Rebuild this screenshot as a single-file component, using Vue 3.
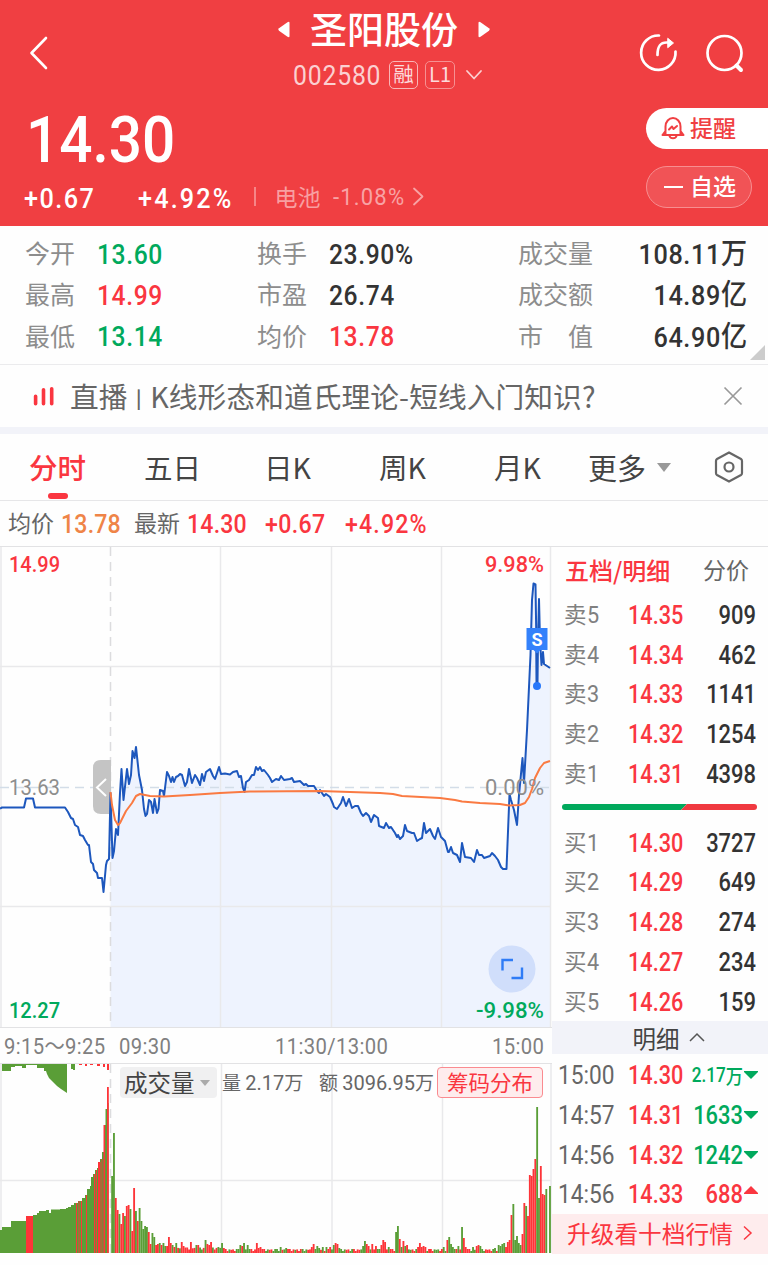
<template>
  <div class="page">
    <!-- Header -->
    <header class="header">
      <div class="nav">
        <svg class="back" viewBox="0 0 20 34"><path d="M17 2 2.500 17 17 32" /></svg>
        <div class="title-box">
          <div class="title">
            <svg class="tri" viewBox="0 0 12 17"><path d="M11.500 2v13q0 2-2 .8L1 9.800q-1.500-1.300 0-2.600L9.500 1.200q2-1.200 2 .8z" /></svg>
            <h1>圣阳股份</h1>
            <svg class="tri" viewBox="0 0 12 17"><path d="M.5 2v13q0 2 2 .8L11 9.800q1.500-1.300 0-2.600L2.500 1.200q-2-1.200-2 .8z" /></svg>
          </div>
          <div class="code-row">
            <span class="num code">002580</span>
            <span class="tag">融</span>
            <span class="tag tag-l1">L1</span>
            <svg class="chev-down" viewBox="0 0 16 10"><path d="M1 1l7 7.500L15 1" /></svg>
          </div>
        </div>
        <div class="nav-icons">
          <svg viewBox="0 0 40 40">
            <path d="M20 2.500a17.200 17.200 0 1 0 16.500 16" />
            <path d="M18.500 22c0-8 2-12.500 9-12.500h4" />
            <path class="solid" d="M29 5.500l5.500 4.500-5.500 4.500z" />
          </svg>
          <svg viewBox="0 0 40 40"><circle cx="18.500" cy="20" r="17" /><path d="M30.500 32.500l4.500 4.500" class="thick" /></svg>
        </div>
      </div>

      <div class="quote">
        <div>
          <div class="num price">14.30</div>
          <div class="change">
            <span class="num chg">+0.67</span>
            <span class="num pct">+4.92%</span>
            <i class="sep" />
            <span class="sector">电池</span>
            <span class="num sector-pct">-1.08%</span>
            <svg class="chev-right" viewBox="0 0 11 19"><path d="M1 1.500l8.500 8L1 17.500" /></svg>
          </div>
        </div>
        <div class="actions">
          <div class="btn-remind">
            <svg viewBox="0 0 24 24">
              <path d="M4.500 19V10.500a7.500 8.500 0 0 1 15 0V19M1.500 19h21M4.500 15l-3 4M19.500 15l3 4M8.500 20c1 3 6 3 7 0" />
              <path d="M8 13.500l3-3 1.500 2.500L16 10" />
            </svg>
            <span>提醒</span>
          </div>
          <div class="btn-fav"><i class="minus" /><span>自选</span></div>
        </div>
      </div>
    </header>

    <!-- Key stats -->
    <section class="stats">
      <div v-for="row in STATS" :key="row[0].label" class="stats-row">
        <template v-for="s in row" :key="s.label">
          <span class="stat-label">{{ s.label }}</span>
          <span class="num stat-value" :class="s.tone">{{ s.value }}<b v-if="s.unit">{{ s.unit }}</b></span>
        </template>
      </div>
      <i class="corner" />
    </section>

    <!-- Live banner -->
    <section class="banner">
      <svg class="live" viewBox="0 0 22 20"><path d="M2.600 10.200v7.600M10.500 3.700v14.100M18.700 2.700v15.100" /></svg>
      <span class="banner-text">直播<i class="bar">丨</i>K线形态和道氏理论-短线入门知识?</span>
      <svg class="close" viewBox="0 0 20 20"><path d="M1.500 1.500l17 17M18.500 1.500l-17 17" /></svg>
    </section>

    <!-- Period tabs -->
    <nav class="tabs">
      <div v-for="(tab, i) in TABS" :key="tab" class="tab" :class="{ active: i === 0 }">{{ tab }}</div>
      <div class="tab more">更多<i class="caret" /></div>
      <svg class="gear" viewBox="0 0 30 32">
        <path d="M15 1.500 27 8q1 .6 1 2v12q0 1.400-1 2L15 30.500 3 24q-1-.6-1-2V10q0-1.400 1-2z" />
        <circle cx="15" cy="16" r="4.500" />
      </svg>
    </nav>

    <section class="summary">
      <span class="sum-label">均价</span><span class="num avg">13.78</span>
      <span class="sum-label">最新</span><span class="num last">14.30</span>
      <span class="num delta">+0.67</span><span class="num delta-pct">+4.92%</span>
    </section>

    <main class="body">
      <div class="charts">
        <!-- Intraday price -->
        <svg class="price-chart" viewBox="0 547 552 480">
          <path class="area" :d="areaPath" />
          <path class="grid" d="M1 547V1027M220.500 547V1027M331.500 547V1027M441.500 547V1027M550.500 547V1027M0 666.500H551M0 906.500H551" />
          <path class="grid dash-v" d="M110.500 547V1027" />
          <path class="dash-h" d="M0 787.500H551" />
          <text x="9" y="572" class="t red" textLength="51" lengthAdjust="spacingAndGlyphs">14.99</text>
          <text x="485" y="572" class="t red" textLength="59" lengthAdjust="spacingAndGlyphs">9.98%</text>
          <text x="9" y="1018" class="t green" textLength="51" lengthAdjust="spacingAndGlyphs">12.27</text>
          <text x="476" y="1018" class="t green" textLength="68" lengthAdjust="spacingAndGlyphs">-9.98%</text>
          <path class="handle" d="M111 760h-10q-8 0-8 8v38q0 8 8 8h10z" />
          <path class="handle-arrow" d="M106 779l-9 8.500 9 8.500" />
          <path class="line" :d="pricePath" />
          <path class="avg-line" :d="avgPath" />
          <text x="9" y="795" class="t mid" textLength="51" lengthAdjust="spacingAndGlyphs">13.63</text>
          <text x="485" y="795" class="t mid" textLength="59" lengthAdjust="spacingAndGlyphs">0.00%</text>
          <path class="sell-stem" d="M537 650V686" />
          <path class="sell" d="M526.500 628h21v22h-7l-3.500 3.500-3.500-3.500h-7z" />
          <text x="537" y="645.500" class="sell-text">S</text>
          <circle class="sell-dot" cx="537" cy="686" r="4" />
          <circle class="expand" cx="512" cy="969" r="23.500" />
          <path class="expand-icon" d="M502.500 970.500v-10.500h10.500M522 967.500v10.500h-10.500" />
        </svg>

        <div class="time-axis">
          <span class="num">9:15～9:25</span><span class="num">09:30</span><span class="num">11:30/13:00</span><span class="num">15:00</span>
        </div>

        <!-- Volume -->
        <div class="volume">
          <svg viewBox="0 1064 552 189">
            <path class="grid" d="M1 1064V1253M221.500 1064V1253M332 1064V1253M442.500 1064V1253M551 1064V1253M0 1180.500H551" />
            <path class="grid dash-v" d="M110.500 1064V1253" />
            <path class="vol-green" :d="preArea" />
            <rect v-for="(b, i) in PRE_RED" :key="'p' + i" class="vol-red" :x="b[0]" :y="1253 - b[2]" :width="b[1]" :height="b[2]" />
            <path class="vol-green" d="M2 1064H67V1093L61 1089 57 1086 53 1082 49 1078 47 1074 46 1071H44V1068H37V1065H26V1068H22V1066H15V1067H11V1071H2zM71 1064h4v6h-2v-1h-2z" />
            <path class="vol-red" d="M79 1064h3v1h-3zM85 1064h2v2h-2zM90 1064h3v1h-3zM97 1064h3v2h-3zM103 1064h2v3h-2zM107 1064h2v6h-2z" />
            <rect
              v-for="b in volumeBars"
              :key="b.x"
              :class="b.up ? 'vol-red' : 'vol-green'"
              :x="b.x"
              :y="1253 - b.h"
              width="1.850"
              :height="b.h"
            />
          </svg>
          <div class="vol-head">
            <span class="vol-select">成交量<i class="caret small" /></span>
            <span class="vol-item">量 <em class="num">2.17</em>万</span>
            <span class="vol-item amount">额 <em class="num">3096.95</em>万</span>
            <span class="chips">筹码分布</span>
          </div>
        </div>
      </div>

      <!-- Order book -->
      <aside class="book">
        <div class="book-head"><b>五档/明细</b><span>分价</span></div>
        <div v-for="o in ASKS" :key="o[0]" class="order">
          <span>卖<em class="num">{{ o[0] }}</em></span><span class="num red">{{ o[1] }}</span><span class="num qty">{{ o[2] }}</span>
        </div>
        <svg class="ratio" viewBox="0 0 195 6"><path class="r-green" d="M3 0H125L119 6H3Q0 6 0 3T3 0z" /><path class="r-red" d="M125 0H192Q195 0 195 3T192 6H119z" /></svg>
        <div v-for="o in BIDS" :key="o[0]" class="order">
          <span>买<em class="num">{{ o[0] }}</em></span><span class="num red">{{ o[1] }}</span><span class="num qty">{{ o[2] }}</span>
        </div>
        <div class="detail-bar">明细<svg viewBox="0 0 16 9"><path d="M1 8l7-7 7 7" /></svg></div>
        <div v-for="(t, i) in TRADES" :key="i" class="trade">
          <span class="num">{{ t.time }}</span>
          <span class="num red">{{ t.price }}</span>
          <span class="num vol" :class="[t.up ? 'red' : 'green', { wan: t.wan }]">{{ t.vol }}<b v-if="t.wan">万</b></span>
          <svg class="arrow" :class="{ up: t.up }" viewBox="0 0 14 8"><path :d="t.up ? 'M7 0l7 7v1H0V7z' : 'M7 8l7-7V0H0v1z'" /></svg>
        </div>
        <div class="upgrade"><span>升级看十档行情</span><svg viewBox="0 0 9 16"><path d="M1 1.500l7 6.500-7 6.500" /></svg></div>
      </aside>
    </main>
  </div>
</template>

<script setup>
const STATS = [
  [
    { label: '今开', value: '13.60', tone: 'green' },
    { label: '换手', value: '23.90%' },
    { label: '成交量', value: '108.11', unit: '万' },
  ],
  [
    { label: '最高', value: '14.99', tone: 'red' },
    { label: '市盈', value: '26.74' },
    { label: '成交额', value: '14.89', unit: '亿' },
  ],
  [
    { label: '最低', value: '13.14', tone: 'green' },
    { label: '均价', value: '13.78', tone: 'red' },
    { label: '市　值', value: '64.90', unit: '亿' },
  ],
]

const TABS = ['分时', '五日', '日K', '周K', '月K']

const ASKS = [
  [5, '14.35', 909],
  [4, '14.34', 462],
  [3, '14.33', 1141],
  [2, '14.32', 1254],
  [1, '14.31', 4398],
]
const BIDS = [
  [1, '14.30', 3727],
  [2, '14.29', 649],
  [3, '14.28', 274],
  [4, '14.27', 234],
  [5, '14.26', 159],
]
const TRADES = [
  { time: '15:00', price: '14.30', vol: '2.17', wan: true },
  { time: '14:57', price: '14.31', vol: '1633' },
  { time: '14:56', price: '14.32', vol: '1242' },
  { time: '14:56', price: '14.33', vol: '688', up: true },
]

// Call auction, 9:15 - 9:25
const AUCTION = '0,808.5 2,807.5 24,807.5 26,798.5 33,798.5 35,807.5 65,807.5 68,812 71,818 73,819 75,825 78,827 80,835 83,836 85,840 88,845 89,845 91,862 93,864 94,870 97,873 98,878 102,878 103.5,892 106,865 107,861 109,859'
// Continuous trading
const SESSION = '110.5,793 112.500,858 114,851 116,829 118,835 120,793 121.5,769 123.5,800 127,769 129,784 131,775 132.5,751 134.5,758 136,747 139,775 142,790 144,809 145.5,816 147,814 149,800 151,802 153,813 154.5,799 157,813 158.5,809 160,790 163,791 164,796 167,772 169,776 171,782 172.5,777 174,782 176,777 178,776 180,774 182,775 185,786 187,782 189,769 192,783 195,775 197,778 200,785 202,774 204,781 206,772 210,769 213,776 215,779 219,767 221,774 225,773.5 230,774.5 233,772 237,771 239,777 241,776 243,788 244.5,792 246,782 249,780 252,775 254,775 256,767 258,770 260,767 262,771 264,770 268,775 270,778 272,782 276,779 279,780 281,776 284,780 290,779 292,778 294,782 300,781 304,785 306,784 308,786 314,786 317,791 319,793 320,790 324,796 326,794 330,797 333,804 334,807 337,809 341,803 343,797 346,806 349,799 352,808 355,806 358,806 361,813 363,816 366,813 369,816 371,822 374,815 378,818 379,826 384,828 386,823 389,828 391,827 395,833 397,837 398,835 400,839 403,836 405,825 407,831 412,833 414,833 417,841 420,839 422,838 424,823 426,833 430,829 433,836 435,839 438,828 441,837 445,841 448,852 449,852 451,847 453,853 457,855 460,862 462,843 465,857 471,858 474,862 477,850 479,855 482,855 484,858 490,856 492,853 495,856 498,860 501,867 503,869 506.5,869 509.5,794 511,800 514,810 517,825 519,795 522.5,758 524,783 527,730 530.5,655 532,600 533.500,583.500 535.5,584.500 537,683 538,640 539,599 540,640 541.5,665 543,652 544,664 547,666 550,668'
const AVERAGE = '110.5,792 112,805 115,820 118,825 120,823 126,811 132,803 136,796 140,794 150,796 164,796.5 190,795 220,793 250,791.5 320,791 350,792 380,793 393,794 402,796 440,798 455,800 462,801.5 480,803 500,804 509,805.5 520,805 525,803 529,797 532,789 535,778 540,768 544,763 547,762 550,761'

const toPath = (points) => 'M' + points.split(' ').join('L')
const pricePath = toPath(AUCTION + ' ' + SESSION)
const avgPath = toPath(AVERAGE)
const areaPath = toPath(SESSION) + 'L550,1027L110.5,1027z'

// Auction volume as steps: x, height
const PRE_STEPS = [
  [0, 23], [2, 26], [11, 32], [26, 37], [33, 38], [37, 40], [39, 42], [46, 43], [49, 40], [51, 43.5], [60, 44],
  [66, 45], [68, 46], [71, 48], [74, 50], [78, 52], [82, 55], [85, 58], [87, 64], [90, 67], [91, 76], [93, 79],
  [95, 83], [97, 85], [98, 91], [100, 94], [102, 101], [104, 128], [105.5, 144], [107, 150], [108.6, 0],
]
const preArea = 'M0 1253' + PRE_STEPS.map(([x, h], i) => {
  const prev = i ? PRE_STEPS[i - 1][1] : 0
  return `V${1253 - prev}H${x}V${1253 - h}`
}).join('') + 'z'

// x, width, height
const PRE_RED = [
  [26, 7, 37], [76, 1, 50], [78.5, 1, 52], [81, 1, 52], [86, 1, 58], [94, 1.2, 79], [96, 1, 83],
  [98, 2.5, 91], [101.500, 0.8, 94], [103.500, 1.6, 128], [107, 1.800, 166],
]

// Notable bars by x position, negative = down
const PEAKS = [
  [111, -77], [113, -120], [115, 55], [117, 43], [118.500, -39], [120, 29], [122, 40], [124, -37], [126, 47], [128, 48],
  [129.500, -44], [131, 22], [133, 65], [135, -42], [137, 32], [139, -45], [140.500, -32], [142, -24], [144, -27],
  [146, -26], [148, 21], [149.500, 9], [151.500, -20], [153, -16], [155, 8], [157, 9], [159, -10], [161, 8], [163, -10],
  [164.500, -7], [166, 7], [168, 16], [170, 10], [172, -8], [174, 6], [176, -10], [181, 11], [183, 7], [190, 11],
  [196, -8], [198, 8], [205, -13], [207, 9], [209, 8], [211, 11], [217, -6], [221, -10], [223, 5], [240, -8],
  [242, 7], [244, -10], [246, -8], [256, 10], [258, 5], [260, 6], [280, -6], [285, -5], [311, 6], [313, 9],
  [317, -7], [319, -5], [322, -6], [325, -6], [329, 6], [333, -8], [335, 10], [337, 9], [339, -5], [362, -7],
  [364, -12], [366, 9], [368, 7], [371, 9], [375, 7], [380, 8], [383, 13], [385, 11], [387, -6], [395, -21],
  [397, -27], [399, 14], [401, -6], [403, 12], [405, -7], [407, 8], [417, 6], [419, 10], [421, 6], [423, 7],
  [425, 6], [442, -6], [446, 13], [448, -16], [450, -9], [452, -6], [458, -7], [461, -26], [463, 15], [465, 6],
  [473, -6], [475, 7], [477, 8], [479, -7], [493, -4], [495, -5], [497, -8], [499, -7], [501, -9], [503, -10],
  [505, 6], [507, 11], [509, 13], [511, 38], [512.500, -49], [514.500, -13], [516.500, -17], [518, -10], [520, -8],
  [522, 19], [523.500, 50], [525.500, -47], [527, 37], [529, 78], [531, 77], [533, 84], [534.500, 94], [536.500, -146],
  [538, -55], [540, 87], [542, 59], [543.500, 58], [545.500, -64], [547.500, -5], [550.500, -67],
]

const PITCH = 1.832
const volumeBars = Array.from({ length: 240 }, (_, i) => {
  // quiet minutes sit at 2-5 px, a little busier in the first hour
  const base = (i < 62 ? 3.500 : 2) + ((i * i + 3 * i) % 7) * 0.4
  return { x: +(111.2 + i * PITCH).toFixed(2), h: base, up: (i * 5 + (i % 4) * 3) % 9 < 5 }
})
PEAKS.forEach(([x, v]) => {
  const i = Math.min(239, Math.max(0, Math.round((x - 111.2) / PITCH)))
  volumeBars[i].h = Math.abs(v)
  volumeBars[i].up = v > 0
})
volumeBars[238].h = 0
</script>

<style>
body { background: #fefefe; }
</style>

<style scoped>
.page {
  width: 768px;
  height: 1265px;
  overflow: hidden;
  background: #fefefe;
  color: #333;
  font-family: "Noto Sans CJK SC", sans-serif;
}
svg { display: block; fill: none; flex-shrink: 0; overflow: visible; }
b, em, i { font-style: normal; font-weight: inherit; }
span, b { white-space: nowrap; }

/* Condensed figures */
.num {
  font-family: Roboto, "Noto Sans CJK SC", sans-serif;
  font-weight: 500;
  transform: scaleX(0.9);
  transform-origin: 0 50%;
}
.red { color: #fa3640; }
.green { color: #00a95c; }

/* Header */
.header {
  height: 226px;
  box-sizing: border-box;
  background: #f03f42;
  color: #fff;
}
.header svg { stroke: #fff; stroke-linecap: round; stroke-linejoin: round; }
.nav {
  height: 102px;
  display: grid;
  grid-template-columns: 278px 1fr 129px;
}
.back { width: 20px; height: 34px; margin: 36px 0 0 29px; stroke-width: 2.600; }
.title { display: flex; align-items: center; height: 60px; }
.title h1 { margin: -4px 20px 0 20px; font-size: 37px; font-weight: 500; line-height: 56px; }
.tri { width: 12px; height: 17px; margin-top: -1px; }
.header .tri { fill: #fff; stroke: none; }
.code-row { display: flex; align-items: center; height: 30px; padding-left: 15px; }
.code { width: 96px; font-size: 27.500px; font-weight: 400; letter-spacing: 0.9px; color: #fbd0d1; }
.tag {
  width: 27px;
  height: 26px;
  margin-right: 7px;
  border: 1.500px solid #f9b5b6;
  border-radius: 5px;
  font-size: 20.500px;
  line-height: 23px;
  text-align: center;
  color: #fcdadb;
}
.tag-l1 { width: 28px; border-color: #f69092; font-size: 20px; }
.header .chev-down { width: 16px; height: 10px; margin-left: 4px; stroke: #fbd0d1; stroke-width: 1.800; }
.nav-icons { display: flex; gap: 27px; padding-top: 33px; }
.nav-icons svg { width: 40px; height: 40px; stroke-width: 2.700; }
.nav-icons .solid { fill: #fff; stroke-width: 1; }
.nav-icons .thick { stroke-width: 4; }

.quote { display: flex; justify-content: space-between; height: 124px; }
.price { width: 180px; height: 76px; padding-left: 26px; font-size: 65px; line-height: 76px; transform-origin: 26px 50%; }
.change { display: flex; align-items: center; height: 40px; padding-left: 24px; }
.chg, .pct { font-size: 28px; letter-spacing: 1.600px; }
.chg { width: 114px; }
.pct { width: 116px; letter-spacing: 2.400px; }
.sep { width: 1.500px; height: 19px; margin: -4px 19px 0 0; background: #f68587; }
.sector { width: 58px; margin-top: -4px; font-size: 23px; color: #f89fa1; }
.sector-pct { width: 80px; margin-top: -3px; font-size: 24.500px; font-weight: 400; letter-spacing: 1.300px; color: #f8a3a5; }
.header .chev-right { width: 11px; height: 19px; margin-top: -4px; stroke: #f8a3a5; stroke-width: 1.800; }
.actions { width: 122px; padding-top: 6px; font-size: 23px; font-weight: 500; }
.actions span { line-height: 36px; margin-top: -4px; }
.btn-remind {
  display: flex;
  align-items: center;
  height: 41px;
  padding-left: 15px;
  border-radius: 21px 0 0 21px;
  background: #fff;
  color: #f03f42;
}
.btn-remind svg { width: 24px; height: 24px; margin: -1px 5px 0 0; stroke: #f03f42; stroke-width: 2; }
.btn-fav {
  display: flex;
  align-items: center;
  width: 87px;
  height: 40px;
  margin-top: 17px;
  padding-left: 17px;
  border: 1px solid #f78e90;
  border-radius: 21px;
  background: #f15356;
}
.minus { width: 19px; height: 2px; margin-right: 7px; background: #fff; }

/* Stats */
.stats {
  position: relative;
  height: 138px;
  border-bottom: 1px solid #ebebed;
}
.stats-row {
  display: grid;
  grid-template-columns: 72px 160px 72px 189px 102px 127px;
  align-items: center;
  height: 41.300px;
  padding-left: 25px;
}
.stats-row:first-child { padding-top: 8px; }
.stat-label { margin-top: -5px; font-size: 25px; line-height: 36px; color: #8d8d8d; }
.stat-value { font-size: 28px; line-height: 40px; letter-spacing: 0.7px; transform: scaleX(0.88); }
.stat-value:last-child { text-align: right; transform: scaleX(0.9); transform-origin: 100% 50%; }
.stat-value b { font-size: 29px; letter-spacing: 0; }
.corner {
  position: absolute;
  right: 3px;
  bottom: 4px;
  border-left: 15px solid transparent;
  border-bottom: 15px solid #ccc;
}

/* Banner */
.banner {
  display: flex;
  align-items: center;
  height: 62px;
  padding-left: 33px;
  border-bottom: 7px solid #f2f3f9;
}
.live { width: 22px; height: 20px; stroke: #fa3640; stroke-width: 3.600; stroke-linecap: round; }
.banner-text { width: 653px; margin: -2px 0 0 15px; font-size: 28.700px; letter-spacing: 0.100px; color: #666; }
.bar { font-size: 22.500px; }
.close { width: 20px; height: 20px; margin-top: -1px; stroke: #999; stroke-width: 1.700; }

/* Tabs */
.tabs {
  display: flex;
  align-items: center;
  height: 66px;
  border-bottom: 1px solid #e6e6e8;
}
.tab { position: relative; width: 115px; font-size: 28.500px; line-height: 66px; text-align: center; color: #444; }
.active { color: #fa3640; font-weight: 500; }
.active::after {
  content: "";
  position: absolute;
  left: 48px;
  bottom: 1px;
  width: 20px;
  height: 6px;
  border-radius: 3px;
  background: #fa3640;
}
.more { display: flex; align-items: center; width: 126px; padding-left: 13px; font-size: 29px; }
.caret { border: 7px solid transparent; border-top: 9px solid #999; border-bottom: 0; margin-left: 11px; }
.gear { width: 30px; height: 32px; stroke: #666; stroke-width: 2.200; }

.summary {
  display: flex;
  align-items: center;
  height: 45px;
  padding-left: 8px;
  border-bottom: 1px solid #e2e2e4;
  font-size: 26px;
  color: #fa3640;
}
.summary .num { padding-top: 1px; letter-spacing: 0.200px; transform: scaleX(0.89); }
.sum-label { width: 53px; margin-top: -4px; font-size: 23px; line-height: 36px; color: #666; }
.summary .avg { width: 73px; color: #ef8447; }
.last { width: 78px; }
.summary .delta { width: 80px; letter-spacing: 0.4px; }
.summary .delta-pct { letter-spacing: 1.300px; }

/* Charts */
.body { display: flex; }
.charts { width: 552px; }
.price-chart { width: 552px; height: 480px; }
.grid { stroke: #e9e9eb; stroke-width: 1.500; }
.dash-v { stroke: #dcdcde; stroke-dasharray: 9 6; }
.dash-h { stroke: #d3dde8; stroke-width: 1.500; stroke-dasharray: 9 6; }
.area { fill: #eef3fe; }
.line { stroke: #1d57bd; stroke-width: 2; stroke-linejoin: round; }
.avg-line { stroke: #fa7a42; stroke-width: 2; stroke-linejoin: round; }
.t { font: 500 22.500px Roboto, sans-serif; fill: currentColor; }
.mid { fill: #8e8e8e; font-weight: 400; }
.handle { fill: #c4c4c4; }
.handle-arrow { stroke: #fff; stroke-width: 2; }
.sell { fill: #3381fb; }
.sell-text { font: 700 18px Roboto, sans-serif; fill: #fff; text-anchor: middle; }
.sell-stem { stroke: #1d57bd; stroke-width: 3; }
.sell-dot { fill: #2777fa; }
.expand { fill: #d0defb; }
.expand-icon { stroke: #2f7cf6; stroke-width: 2.400; }

.time-axis {
  display: grid;
  grid-template-columns: 115px 156px 217px 1fr;
  height: 35px;
  padding-left: 4px;
  border-top: 1px solid #e2e2e4;
  border-bottom: 1px solid #e2e2e4;
  font-size: 22.500px;
  line-height: 36px;
  color: #808080;
}
.time-axis .num { font-weight: 400; letter-spacing: 0.4px; }
.volume { position: relative; }
.volume svg { width: 552px; height: 189px; }
.vol-green { fill: #5a9e37; }
.vol-red { fill: #fd3438; }
.vol-head {
  position: absolute;
  top: 3px;
  left: 120px;
  display: flex;
  align-items: center;
  height: 31px;
  color: #666;
  font-size: 19px;
}
.vol-select {
  display: flex;
  align-items: center;
  width: 93px;
  height: 31px;
  margin-right: 5px;
  padding-left: 4px;
  border-radius: 4px;
  background: #f0f0f1;
  font-size: 23.500px;
  line-height: 27px;
  color: #444;
}
.small { border-width: 5px; border-top-width: 6px; border-top-color: #aaa; margin-left: 5px; }
.vol-item { width: 97px; margin-top: -2px; }
.vol-item em { font-size: 20px; font-weight: 400; }
.amount { width: 118px; }
.chips {
  width: 104px;
  height: 29px;
  border: 1.500px solid #fa8b90;
  border-radius: 4px;
  background: #feeced;
  font-size: 21.500px;
  line-height: 27px;
  text-align: center;
  color: #fa3640;
}

/* Order book */
.book { width: 216px; }
.book-head { display: flex; align-items: center; height: 44px; padding: 0 0 4px 13px; }
.book-head b { width: 138px; font-size: 24px; font-weight: 500; color: #fa3640; }
.book-head span { font-size: 23px; color: #666; }
.order {
  display: grid;
  grid-template-columns: 64px 67px 1fr;
  align-items: center;
  height: 39.700px;
  padding: 0 12px;
  font-size: 25.500px;
}
.order > span:first-child { margin-top: -1px; font-size: 22.500px; line-height: 37px; color: #808080; }
.order em { display: inline-block; font-size: 24px; font-weight: 400; }
.order .red, .trade .red { transform: scaleX(0.85); }
.order .qty { text-align: right; transform: scaleX(0.86); transform-origin: 100% 50%; }
.ratio { width: 195px; height: 6px; margin: 10.500px 0 13px 10px; }
.r-green { fill: #00a95c; }
.r-red { fill: #f03940; }
.detail-bar {
  display: flex;
  align-items: center;
  justify-content: center;
  gap: 9px;
  height: 33px;
  margin-bottom: 1px;
  padding-left: 17px;
  background: #f2f3f9;
  font-size: 23.500px;
  line-height: 30px;
  color: #444;
}
.detail-bar svg { width: 16px; height: 9px; stroke: #555; stroke-width: 1.500; }
.trade {
  display: grid;
  grid-template-columns: 70px 55px 60px 14px;
  align-items: center;
  height: 39.700px;
  padding-left: 6px;
  font-size: 25.500px;
  color: #666;
}
.trade span:first-child { font-weight: 400; letter-spacing: 0; transform: scaleX(0.89); }
.trade .vol { display: flex; justify-content: flex-end; transform: scaleX(0.86); transform-origin: 100% 50%; }
.trade .wan { align-items: center; font-size: 20px; }
.arrow { width: 14px; height: 8px; margin-left: 1px; fill: #00a95c; }
.arrow.up { fill: #fa3640; transform: translateY(-4px); }
.upgrade {
  display: flex;
  align-items: center;
  height: 40px;
  padding-left: 15px;
  background: #feeced;
  font-size: 23.700px;
  color: #fa3640;
}
.upgrade span { margin-top: -3px; }
.upgrade svg { width: 9px; height: 16px; margin: -2px 0 0 10px; stroke: #fa3640; stroke-width: 1.500; }
</style>
